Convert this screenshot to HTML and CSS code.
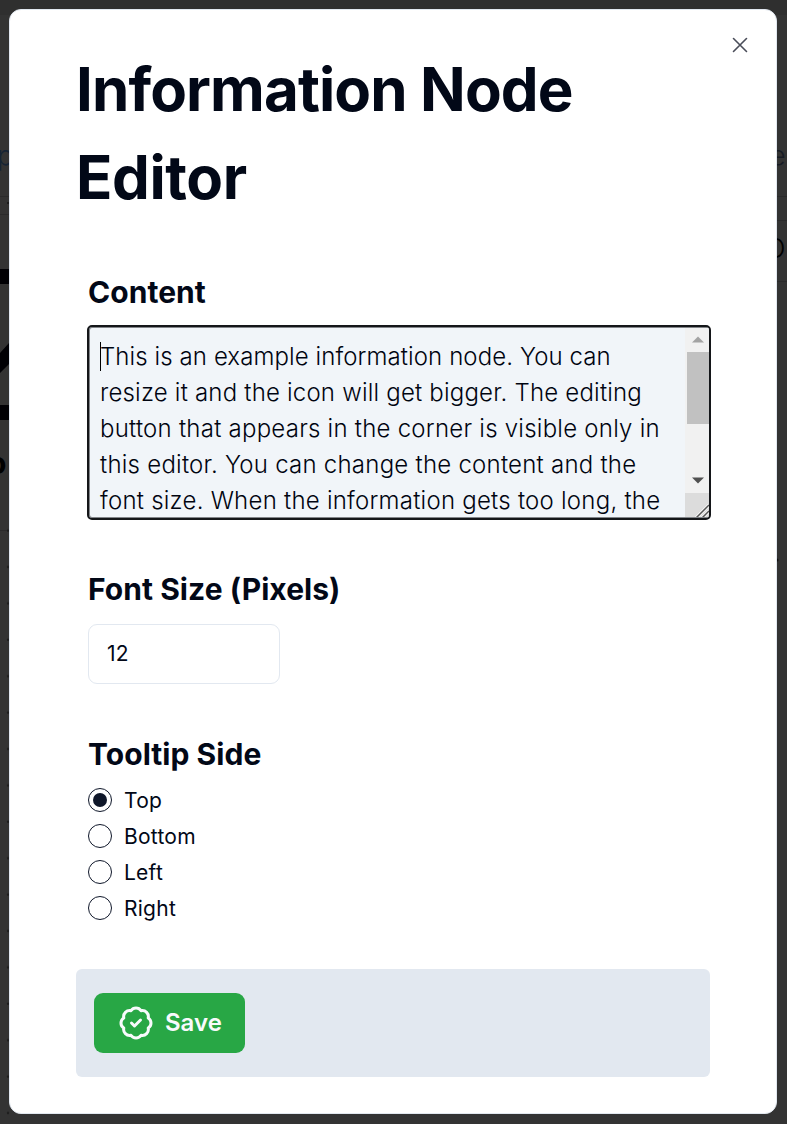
FILE: index.html
```html
<!DOCTYPE html>
<html lang="en">
<head>
<meta charset="utf-8">
<title>Information Node Editor</title>
<link rel="stylesheet" href="styles.css">
</head>
<body>
<div class="canvas">
  <svg class="backdrop" width="787" height="1124" viewBox="0 0 787 1124">
    <defs><pattern id="dots" x="0" y="520" width="787" height="36.4" patternUnits="userSpaceOnUse"><circle cx="8" cy="10.5" r="1.2" fill="#1c1c1c"/></pattern></defs>
    <rect width="787" height="15" fill="#2f2f2f"/>
    <path d="M0 196.500h9M0 214.500h9M777 196.500h10M777 220.500h10M777 281.500h10M0 530.500h9" stroke="#2a2a2b"/>
    <path d="M0 269h9v15H0zM0 405h9v15H0zM0 353l9-10v21l-9 9z" fill="#000004"/>
    <rect y="520" width="10" height="604" fill="url(#dots)"/>
    <path d="M7 203h3" stroke="#1c1c1c" stroke-width="2"/>
    <circle cx="777" cy="560" r="1.500" fill="#111"/>
    <text x="-3" y="165" font-size="27" font-weight="300" fill="#152334">p</text>
    <text x="770" y="165" font-size="27" font-weight="300" fill="#171b24">e</text>
    <text x="765" y="258" font-size="27" font-weight="300" fill="#000">O</text>
    <text x="-12" y="474" font-size="30" font-weight="700" fill="#000">o</text>
  </svg>
  <main class="dialog">
    <button class="close" aria-label="Close"><svg width="16" height="16" viewBox="0 0 16 16"><path d="M1.500 1.500l13 13M14.500 1.500l-13 13"/></svg></button>
    <h1 class="title"><span class="title-lead">Information Node</span> Editor</h1>
    <section class="field field-content">
      <h2 class="label">Content</h2>
      <div class="editor">
        <div class="editor-text"><span class="caret"></span><span class="tight">This is an example information node. You can</span><br><span class="snug">resize it and the icon will get bigger. The editing</span><br>button that appears in the corner is visible only in<br>this editor. You can change the content and the<br>font size. When the information gets too long, the</div>
        <div class="scroll">
          <div class="track">
            <svg class="arrow" width="24" height="24"><path d="M7 14.500h12l-6-6z" fill="#a3a3a3"/></svg>
            <div class="thumb"></div>
            <svg class="arrow arrow-down" width="24" height="24"><path d="M7 8.500h12l-6 6z" fill="#505050"/></svg>
          </div>
          <svg class="corner" width="24" height="24"><path d="M11 25L24 12M17 25l7-7" stroke="#fff" stroke-width="3"/><path d="M11 25L24 12M17 25l7-7" stroke="#555" stroke-width="1.500"/></svg>
        </div>
      </div>
    </section>
    <section class="field field-size">
      <h2 class="label">Font Size (Pixels)</h2>
      <div class="input">12</div>
    </section>
    <section class="field field-side">
      <h2 class="label">Tooltip Side</h2>
      <div class="options">
        <label class="option"><span class="radio checked"></span>Top</label>
        <label class="option"><span class="radio"></span>Bottom</label>
        <label class="option"><span class="radio"></span>Left</label>
        <label class="option"><span class="radio"></span>Right</label>
      </div>
    </section>
    <footer class="footer">
      <button class="save"><svg width="36" height="36" viewBox="0 0 24 24"><path d="M3.850 8.620a4 4 0 0 1 4.780-4.770 4 4 0 0 1 6.740 0 4 4 0 0 1 4.780 4.780 4 4 0 0 1 0 6.740 4 4 0 0 1-4.770 4.780 4 4 0 0 1-6.750 0 4 4 0 0 1-4.780-4.770 4 4 0 0 1 0-6.760Z"/><path d="m9 12 2 2 4-4"/></svg>Save</button>
    </footer>
  </main>
</div>
</body>
</html>
```
FILE: styles.css
```css
* { box-sizing: border-box; }
body { margin: 0; font-family: Inter, "Liberation Sans", sans-serif; color: #020817; }
h1, h2 { margin: 0; }
button { font: inherit; border: 0; }
.canvas { position: relative; height: 1124px; padding: 9px 10px 10px 9px; overflow: hidden; background: #333; }
.backdrop { position: absolute; inset: 0; }
.dialog { position: relative; height: 1105px; padding: 35px 66px 0; border: 1px solid #e2e8f0; border-radius: 12px; background: #fff; }
.close { position: absolute; top: 27px; right: 28px; width: 16px; height: 16px; padding: 0; background: none; }
.close svg { display: block; fill: none; stroke: #4a4d59; stroke-width: 1.6; stroke-linecap: round; }
.title { font-size: 60px; line-height: 88px; font-weight: 700; letter-spacing: -0.4px; }
.title-lead { letter-spacing: -0.88px; }
.field { padding-left: 12px; }
.field-content { margin-top: 49px; }
.label { font-size: 30px; line-height: 45px; font-weight: 650; letter-spacing: .05px; }
.editor { display: flex; width: 623.5px; height: 195px; margin: 10px 0 0 -1px; border: 2px solid #141619; border-radius: 5px; box-shadow: inset 0 0 0 1px #14161980; background: #f1f5f9; overflow: hidden; }
.editor-text { flex: 1; padding: 12px 0 0 11px; font-size: 24px; line-height: 36px; font-weight: 330; letter-spacing: .24px; white-space: nowrap; color: #000410; }
.tight { letter-spacing: .09px; }
.snug { letter-spacing: .2px; }
.caret { display: inline-block; width: 1px; height: 29px; margin-right: -1px; vertical-align: -6px; background: #000; }
.scroll { display: flex; flex-direction: column; width: 24px; flex: none; padding: 1px 0; }
.track { flex: 1; display: flex; flex-direction: column; background: #f1f1f1; }
.arrow { flex: none; }
.thumb { height: 72px; margin-left: 2px; background: #c1c1c1; }
.arrow-down { margin-top: auto; }
.corner { background: #dcdcdc; flex: none; }
.field-size { margin-top: 47px; }
.input { width: 192px; height: 60px; margin-top: 12px; padding: 0 18px; border: 1px solid #e2e8f0; border-radius: 9px; font-size: 21px; line-height: 58px; letter-spacing: .3px; }
.field-side { margin-top: 48px; }
.options { margin-top: 5px; }
.option { display: flex; align-items: center; gap: 12px; height: 36px; font-size: 21px; letter-spacing: .25px; }
.radio { display: flex; width: 24px; height: 24px; border: 1px solid #0f172a; border-radius: 50%; }
.checked::after { content: ""; width: 14px; height: 14px; margin: auto; border-radius: 50%; background: #0f172a; }
.footer { height: 108px; margin-top: 43px; padding: 24px 18px; border-radius: 6px; background: #e2e8f0; }
.save { display: flex; align-items: center; gap: 11px; width: 151px; height: 60px; padding: 0 24px 1px; border-radius: 9px; background: #28a745; color: #f8fafc; font-size: 24px; font-weight: 560; }
.save svg { flex: none; fill: none; stroke: currentColor; stroke-width: 2; stroke-linecap: round; stroke-linejoin: round; }
```
